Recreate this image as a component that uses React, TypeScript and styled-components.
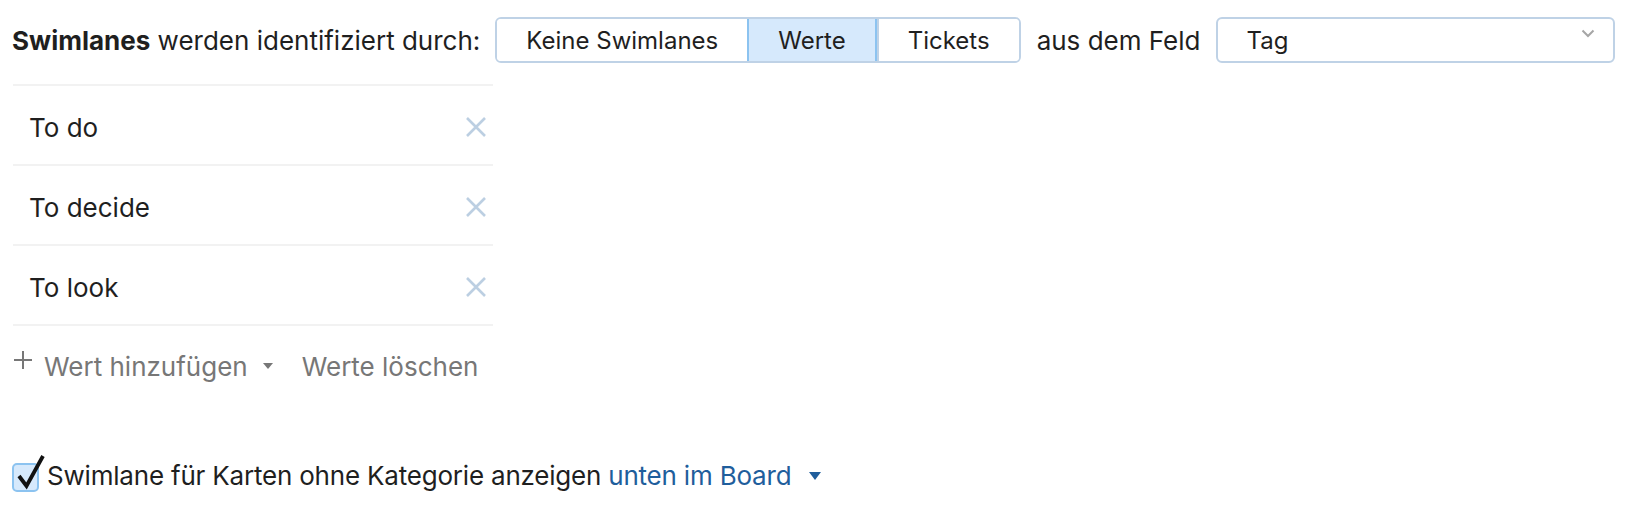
import React from "react";
import styled, { createGlobalStyle } from "styled-components";

const Global = createGlobalStyle`
  html, body { margin: 0; padding: 0; background: #ffffff; }
  body { font-family: Inter, "Noto Sans", "Liberation Sans", sans-serif; color: #1f1f1f; }
`;

const Page = styled.div`
  padding: 17px 12px 0 12px;
  display: flex;
  flex-direction: column;
`;

const TopBar = styled.div`
  display: flex;
  align-items: center;
  gap: 16px;
  height: 46px;
`;

const Label = styled.span`
  font-size: 26px;
  white-space: nowrap;
  b { font-weight: 700; }
`;

const Segmented = styled.div`
  display: flex;
  height: 46px;
  border: 2px solid #bfd2e6;
  border-radius: 6px;
  box-sizing: border-box;
  overflow: hidden;
  margin-left: -1px;
`;

const Segment = styled.button<{ $active?: boolean }>`
  font-family: inherit;
  font-size: 24px;
  white-space: nowrap;
  color: #1f1f1f;
  padding: 0 29px;
  margin: ${(p) => (p.$active ? "-2px 0" : "0")};
  border: none;
  border-left: 2px solid ${(p) => (p.$active ? "#8cc3f0" : "#bfd2e6")};
  border-right: ${(p) => (p.$active ? "2px solid #8cc3f0" : "none")};
  border-top: ${(p) => (p.$active ? "2px solid #8cc3f0" : "none")};
  border-bottom: ${(p) => (p.$active ? "2px solid #8cc3f0" : "none")};
  background: ${(p) => (p.$active ? "#d6e9fc" : "#ffffff")};
  cursor: pointer;
  &:first-child { border-left: none; }
`;

const Select = styled.div`
  width: 399px;
  height: 46px;
  box-sizing: border-box;
  border: 2px solid #bfd2e6;
  border-radius: 6px;
  display: flex;
  align-items: center;
  justify-content: space-between;
  padding: 0 18px 0 29px;
  font-size: 24px;
  margin-left: -1px;
`;

const Chevron = styled.svg`
  align-self: flex-start;
  margin-top: 10px;
`;

const List = styled.div`
  margin-top: 21px;
  width: 480px;
  margin-left: 1px;
  border-bottom: 2px solid #f2f2f2;
`;

const Row = styled.div`
  height: 80px;
  box-sizing: border-box;
  border-top: 2px solid #f2f2f2;
  display: flex;
  align-items: center;
  justify-content: space-between;
  padding: 4px 6px 0 16px;
  font-size: 26px;
`;

const RemoveIcon = styled.svg`
  display: block;
`;

const Actions = styled.div`
  display: flex;
  align-items: center;
  height: 56px;
  margin-top: 12px;
  font-size: 26px;
  color: #777777;
`;

const AddAction = styled.span`
  display: flex;
  align-items: center;
  gap: 12px;
  margin-left: 2px;
`;

const PlusIcon = styled.svg`
  display: block;
  margin-top: -12px;
`;

const SmallCaret = styled.span`
  display: inline-block;
  width: 0;
  height: 0;
  border-left: 5px solid transparent;
  border-right: 5px solid transparent;
  border-top: 6px solid #777;
  margin-left: 15px;
`;

const ClearAction = styled.span`
  margin-left: 29px;
`;

const CheckRow = styled.div`
  display: flex;
  align-items: center;
  margin-top: 65px;
  font-size: 26px;
  letter-spacing: -0.2px;
`;

const CheckBox = styled.span`
  position: relative;
  width: 27px;
  height: 29px;
  box-sizing: border-box;
  border: 2px solid #8cc3f0;
  background: #d6e9fc;
  border-radius: 5px;
  margin-right: 8px;
  margin-top: 4px;
`;

const CheckMark = styled.svg`
  position: absolute;
  left: 2px;
  top: -11px;
`;

const Link = styled.span`
  color: #1f5e9c;
  margin-left: 7px;
`;

const BigCaret = styled.span`
  display: inline-block;
  width: 0;
  height: 0;
  border-left: 6px solid transparent;
  border-right: 6px solid transparent;
  border-top: 8px solid #1f5e9c;
  margin-left: 18px;
`;

const values = ["To do", "To decide", "To look"];

export default function App() {
  return (
    <>
      <Global />
      <Page>
        <TopBar>
          <Label>
            <b>Swimlanes</b> werden identifiziert durch:
          </Label>
          <Segmented>
            <Segment>Keine Swimlanes</Segment>
            <Segment $active>Werte</Segment>
            <Segment>Tickets</Segment>
          </Segmented>
          <Label>aus dem Feld</Label>
          <Select>
            <span>Tag</span>
            <Chevron width="14" height="9" viewBox="0 0 14 9">
              <path d="M1.5 1.5 L7 7 L12.5 1.5" fill="none" stroke="#a6a6a6" strokeWidth="2" />
            </Chevron>
          </Select>
        </TopBar>
        <List>
          {values.map((v) => (
            <Row key={v}>
              <span>{v}</span>
              <RemoveIcon width="22" height="22" viewBox="0 0 22 22">
                <path d="M2 2 L20 20 M20 2 L2 20" stroke="#bccfe2" strokeWidth="2.6" fill="none" />
              </RemoveIcon>
            </Row>
          ))}
        </List>
        <Actions>
          <AddAction>
            <PlusIcon width="18" height="18" viewBox="0 0 18 18">
              <path d="M9 0 V18 M0 9 H18" stroke="#777" strokeWidth="2" fill="none" />
            </PlusIcon>
            <span>Wert hinzufügen</span>
          </AddAction>
          <SmallCaret />
          <ClearAction>Werte löschen</ClearAction>
        </Actions>
        <CheckRow>
          <CheckBox>
            <CheckMark width="30" height="36" viewBox="0 0 30 36">
              <path d="M3 22 L10.5 32 L27 2" fill="none" stroke="#111" strokeWidth="3.8" strokeLinejoin="miter" />
            </CheckMark>
          </CheckBox>
          <span>Swimlane für Karten ohne Kategorie anzeigen</span>
          <Link>unten im Board</Link>
          <BigCaret />
        </CheckRow>
      </Page>
    </>
  );
}
